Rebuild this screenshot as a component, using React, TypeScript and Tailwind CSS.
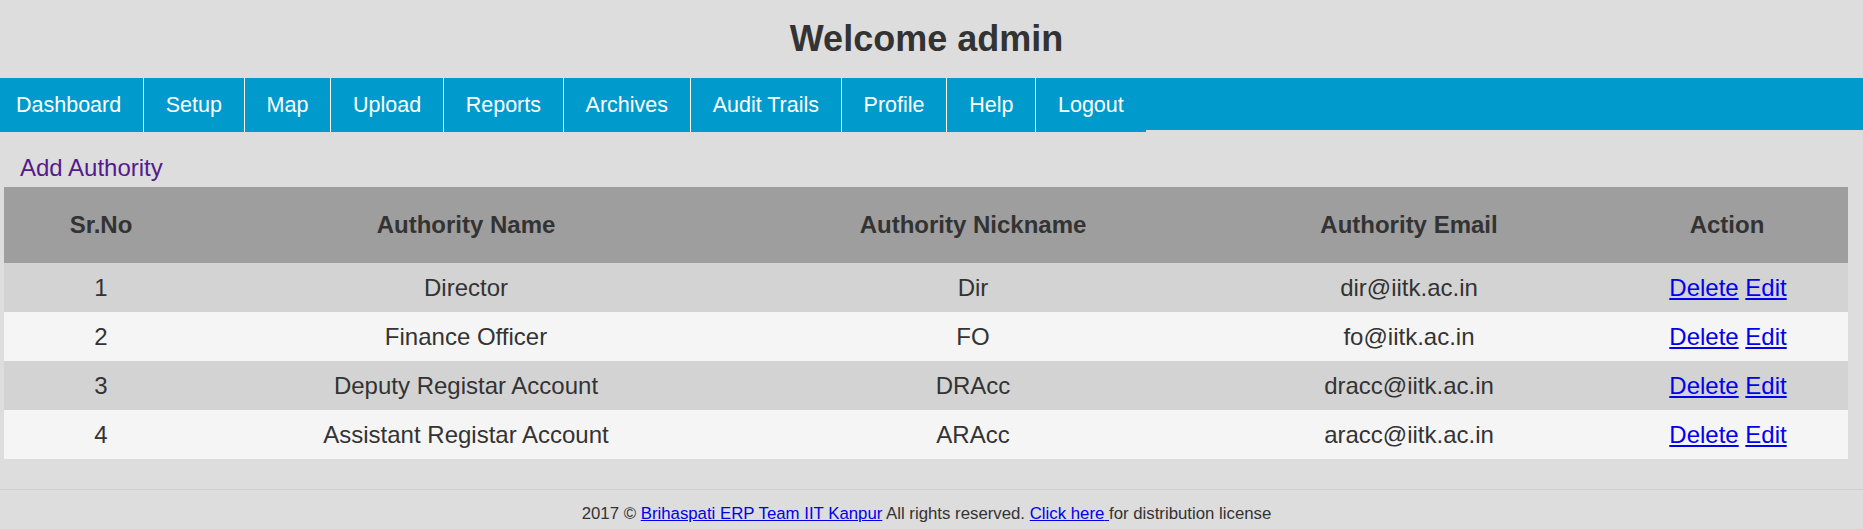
const navItems = [
  'Dashboard',
  'Setup',
  'Map',
  'Upload',
  'Reports',
  'Archives',
  'Audit Trails',
  'Profile',
  'Help',
  'Logout'
]

const rows = [
  { no: 1, name: 'Director', nick: 'Dir', email: 'dir@iitk.ac.in' },
  { no: 2, name: 'Finance Officer', nick: 'FO', email: 'fo@iitk.ac.in' },
  { no: 3, name: 'Deputy Registar Account', nick: 'DRAcc', email: 'dracc@iitk.ac.in' },
  { no: 4, name: 'Assistant Registar Account', nick: 'ARAcc', email: 'aracc@iitk.ac.in' }
]

const App = () => {
  return (
    <div className="min-h-[529px] bg-[#dddddd] font-['Liberation_Sans',Arial,sans-serif] text-[#333333]">
      <div className="w-[1853px] h-[78px] flex items-center justify-center">
        <h1 className="text-[36px] font-bold leading-none">Welcome admin</h1>
      </div>

      <nav className="h-[52px] bg-[#009bcc]">
        <ul className="flex h-[54px]">
          {navItems.map((item, i) => (
            <li
              key={item}
              className={
                i === 0
                  ? 'h-full flex items-center pl-[16px] pr-[21.8px] bg-[#009bcc] text-white text-[21.5px] border-r border-white'
                  : i === navItems.length - 1
                    ? 'h-full flex items-center px-[21.8px] bg-[#009bcc] text-white text-[21.5px]'
                    : 'h-full flex items-center px-[21.8px] bg-[#009bcc] text-white text-[21.5px] border-r border-white'
              }
            >
              {item}
            </li>
          ))}
        </ul>
      </nav>

      <div className="pt-[24px] pb-[5px] pl-[20px] leading-[28px] text-[24px] text-[#551a8b]">
        Add Authority
      </div>

      <table className="ml-[4px] w-[1844px] border-collapse text-[24px] text-center">
        <thead>
          <tr className="h-[76px] bg-[#9e9e9e]">
            <th className="w-[194px] font-bold">Sr.No</th>
            <th className="w-[536px] font-bold">Authority Name</th>
            <th className="w-[478px] font-bold">Authority Nickname</th>
            <th className="w-[394px] font-bold">Authority Email</th>
            <th className="w-[242px] font-bold">Action</th>
          </tr>
        </thead>
        <tbody>
          {rows.map((r) => (
            <tr
              key={r.no}
              className={r.no % 2 === 1 ? 'h-[49px] bg-[#d3d3d3]' : 'h-[49px] bg-[#f5f5f5]'}
            >
              <td>{r.no}</td>
              <td>{r.name}</td>
              <td>{r.nick}</td>
              <td>{r.email}</td>
              <td className="pl-[2px]">
                <a href="#" className="text-[#0000ee] underline">
                  Delete
                </a>{' '}
                <a href="#" className="text-[#0000ee] underline">
                  Edit
                </a>
              </td>
            </tr>
          ))}
        </tbody>
      </table>

      <footer className="mt-[30px] border-t border-[#cfcfcf] pt-[14px] pb-[6px]">
        <p className="w-[1853px] text-center text-[16.8px] leading-[19px]">
          2017 ©{' '}
          <a href="#" className="text-[#0000ee] underline">
            Brihaspati ERP Team IIT Kanpur
          </a>{' '}
          All rights reserved.{' '}
          <a href="#" className="text-[#0000ee] underline">
            Click here{' '}
          </a>
          for distribution license
        </p>
      </footer>
    </div>
  )
}

export default App
